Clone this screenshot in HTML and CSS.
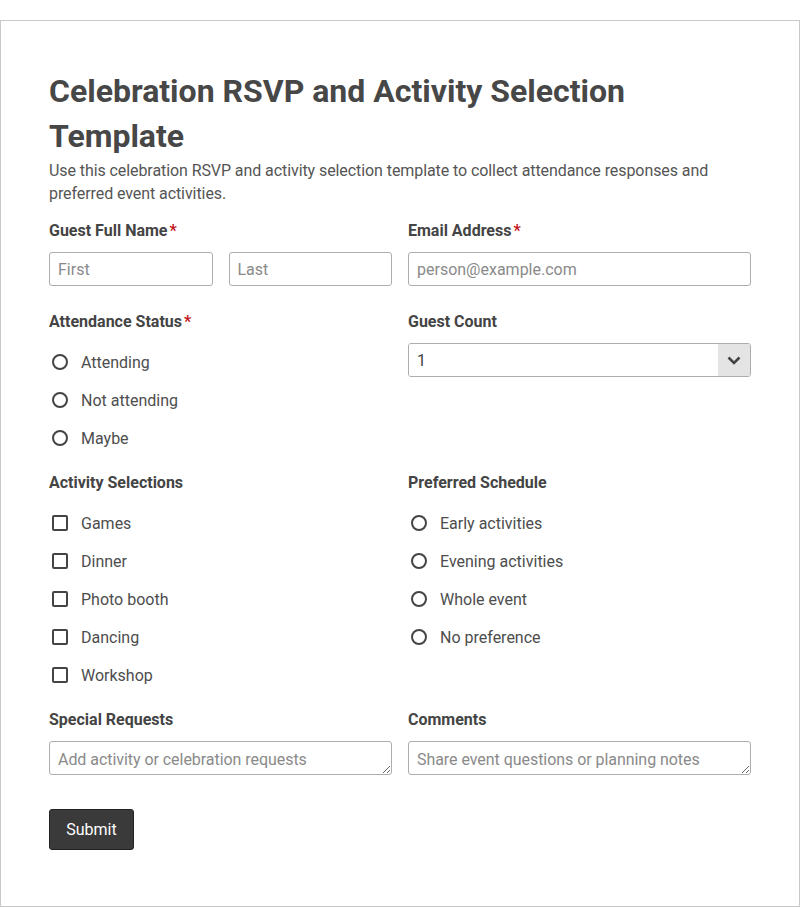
FILE: index.html
```html
<!DOCTYPE html>
<html>
<head>
    <title>Celebration RSVP and Activity Selection Template</title>
    <link rel="stylesheet" href="styles.css">
</head>
<body>
    <div class="container">
        <h1 class="title">Celebration RSVP and Activity Selection Template</h1>
        <p class="desc">Use this celebration RSVP and activity selection template to collect attendance responses and preferred event activities.</p>

        <form class="form">
            <div class="grid">
                <div class="field">
                    <label class="label">Guest Full Name<span class="req">*</span></label>
                    <div class="name-row">
                        <input type="text" placeholder="First">
                        <input type="text" placeholder="Last">
                    </div>
                </div>
                <div class="field">
                    <label class="label">Email Address<span class="req">*</span></label>
                    <input type="email" placeholder="person@example.com">
                </div>

                <div class="field choices">
                    <label class="label">Attendance Status<span class="req">*</span></label>
                    <div class="options">
                        <label class="option"><input type="radio" name="attend"> Attending</label>
                        <label class="option"><input type="radio" name="attend"> Not attending</label>
                        <label class="option"><input type="radio" name="attend"> Maybe</label>
                    </div>
                </div>
                <div class="field">
                    <label class="label">Guest Count</label>
                    <div class="select-box">
                        <select>
                            <option>1</option>
                            <option>2</option>
                            <option>3</option>
                            <option>4</option>
                            <option>5+</option>
                        </select>
                        <span class="select-arrow">
                            <svg width="14" height="9" viewBox="0 0 14 9"><path d="M1.5 1.5 L7 7 L12.5 1.5" fill="none" stroke="#444" stroke-width="2.6"/></svg>
                        </span>
                    </div>
                </div>

                <div class="field choices">
                    <label class="label">Activity Selections</label>
                    <div class="options">
                        <label class="option"><input type="checkbox"> Games</label>
                        <label class="option"><input type="checkbox"> Dinner</label>
                        <label class="option"><input type="checkbox"> Photo booth</label>
                        <label class="option"><input type="checkbox"> Dancing</label>
                        <label class="option"><input type="checkbox"> Workshop</label>
                    </div>
                </div>
                <div class="field choices">
                    <label class="label">Preferred Schedule</label>
                    <div class="options">
                        <label class="option"><input type="radio" name="schedule"> Early activities</label>
                        <label class="option"><input type="radio" name="schedule"> Evening activities</label>
                        <label class="option"><input type="radio" name="schedule"> Whole event</label>
                        <label class="option"><input type="radio" name="schedule"> No preference</label>
                    </div>
                </div>

                <div class="field">
                    <label class="label">Special Requests</label>
                    <textarea placeholder="Add activity or celebration requests"></textarea>
                </div>
                <div class="field">
                    <label class="label">Comments</label>
                    <textarea placeholder="Share event questions or planning notes"></textarea>
                </div>
            </div>

            <button type="submit" class="submit">Submit</button>
        </form>
    </div>
</body>
</html>
```

FILE: styles.css
```css
body {
    margin: 0;
    padding-top: 20px;
    background-color: #ffffff;
    font-family: Roboto, "Liberation Sans", Arial, sans-serif;
    color: #444444;
}

.container {
    border: 1px solid #c8c8c8;
    padding: 48px 48px 56px;
}

.title {
    margin: 0;
    font-size: 32px;
    line-height: 45px;
    font-weight: 700;
    color: #474747;
}

.desc {
    margin: 0;
    font-size: 16px;
    line-height: 23px;
    letter-spacing: -0.08px;
    color: #555555;
}

.form {
    margin-top: 15px;
}

.grid {
    display: grid;
    grid-template-columns: 1fr 1fr;
    column-gap: 16px;
}

.field {
    display: flex;
    flex-direction: column;
    margin-bottom: 25px;
}

.field.choices {
    margin-bottom: 15px;
}

.label {
    font-size: 16px;
    line-height: 22px;
    font-weight: 700;
    color: #444444;
    margin-bottom: 10px;
}

.req {
    color: #c4161c;
    margin-left: 2px;
}

.name-row {
    display: flex;
    gap: 16px;
}

.name-row input {
    flex: 1;
    min-width: 0;
}

input[type="text"],
input[type="email"],
textarea {
    box-sizing: border-box;
    height: 34px;
    width: 100%;
    margin: 0;
    padding: 0 8px;
    border: 1px solid #adadad;
    border-radius: 3px;
    font-family: inherit;
    font-size: 16px;
    color: #444444;
    background-color: #ffffff;
}

textarea {
    display: block;
    padding: 8px 8px 4px;
    line-height: 20px;
    letter-spacing: -0.05px;
    resize: vertical;
}

::placeholder {
    color: #8a8a8a;
}

.select-box {
    display: flex;
    height: 34px;
    box-sizing: border-box;
    border: 1px solid #adadad;
    border-radius: 3px;
    overflow: hidden;
}

.select-box select {
    flex: 1;
    appearance: none;
    -webkit-appearance: none;
    border: none;
    margin: 0;
    padding: 0 8px;
    font-family: inherit;
    font-size: 16px;
    color: #444444;
    background-color: #ffffff;
}

.select-arrow {
    width: 32px;
    display: flex;
    align-items: center;
    justify-content: center;
    background-color: #e4e4e4;
}

.options {
    display: flex;
    flex-direction: column;
}

.option {
    display: flex;
    align-items: center;
    height: 38px;
    font-size: 16px;
    color: #4d4d4d;
}

.option input {
    appearance: none;
    -webkit-appearance: none;
    box-sizing: border-box;
    width: 16px;
    height: 16px;
    margin: 0 13px 0 3px;
    border: 2px solid #444444;
    background-color: #ffffff;
}

.option input[type="radio"] {
    border-radius: 50%;
}

.option input[type="checkbox"] {
    border-radius: 2px;
}

.submit {
    margin-top: 9px;
    width: 85px;
    height: 41px;
    padding: 0;
    border: 1px solid #222222;
    border-radius: 3px;
    background-color: #3a3a3a;
    color: #ffffff;
    font-family: inherit;
    font-size: 16px;
}
```
